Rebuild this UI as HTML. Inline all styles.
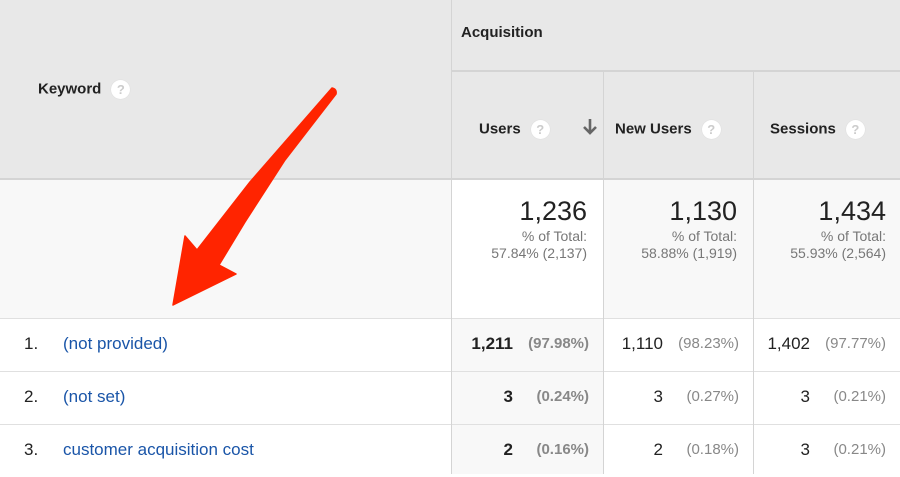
<!DOCTYPE html>
<html><head><style>
body{margin:0;width:900px;height:474px;overflow:hidden;font-family:"Liberation Sans",Arial,sans-serif;background:#fff;position:relative}
div{position:absolute;box-sizing:border-box}
.b{font-weight:bold;font-size:15px;color:#222}
.q{display:inline-block;width:19px;height:19px;border-radius:50%;background:#fff;color:#ccc;font-size:13px;text-align:center;line-height:19px;font-weight:bold;vertical-align:middle;margin-left:10px;box-shadow:0 0 1px #ccc}
.big{font-size:27px;color:#222;text-align:right;right:16px;top:17px}
.pt{font-size:14px;color:#777;text-align:right;line-height:17px;right:16px;top:49px}
.n{font-size:17px;color:#222;top:15px;right:90px;text-align:right}
.p{font-size:15px;color:#888;top:16px;right:14px}
.kw{font-size:17px;color:#1a55a8;left:63px;top:15px}
.ix{font-size:17px;color:#222;left:24px;top:15px}
</style></head><body>
<div style="left:0;top:0;width:900px;height:179px;background:#e8e8e8"></div>
<div style="left:0;top:179px;width:900px;height:140px;background:#f8f8f8"></div>
<div style="left:451px;top:179px;width:152px;height:140px;background:#fff"></div>
<div style="left:451px;top:319px;width:152px;height:155px;background:#f8f8f8"></div>
<div style="left:0;top:178px;width:900px;height:2px;background:#d4d4d4"></div>
<div style="left:451px;top:70px;width:449px;height:2px;background:#d4d4d4"></div>
<div style="left:0;top:318px;width:900px;height:1px;background:#e0e0e0"></div>
<div style="left:0;top:371px;width:900px;height:1px;background:#e0e0e0"></div>
<div style="left:0;top:424px;width:900px;height:1px;background:#e0e0e0"></div>
<div style="left:451px;top:0;width:1px;height:474px;background:#d4d4d4"></div>
<div style="left:603px;top:71px;width:1px;height:403px;background:#d4d4d4"></div>
<div style="left:753px;top:71px;width:1px;height:403px;background:#d4d4d4"></div>
<div class="b" style="left:38px;top:80px">Keyword<span class="q">?</span></div>
<div class="b" style="left:461px;top:24px">Acquisition</div>
<div class="b" style="left:479px;top:120px">Users<span class="q">?</span></div>
<svg style="position:absolute;left:582px;top:117px" width="16" height="20"><path d="M8,2 V16 M2,10 L8,16 L14,10" fill="none" stroke="#666" stroke-width="2.6"/></svg>
<div class="b" style="left:615px;top:120px">New Users<span class="q">?</span></div>
<div class="b" style="left:770px;top:120px">Sessions<span class="q">?</span></div>
<div style="left:451px;top:179px;width:152px;height:140px"><div class="big">1,236</div><div class="pt">% of Total:<br>57.84% (2,137)</div></div>
<div style="left:603px;top:179px;width:150px;height:140px"><div class="big">1,130</div><div class="pt">% of Total:<br>58.88% (1,919)</div></div>
<div style="left:753px;top:179px;width:147px;height:140px"><div class="big" style="right:14px">1,434</div><div class="pt" style="right:14px">% of Total:<br>55.93% (2,564)</div></div>
<div style="left:0;top:319px;width:451px;height:52px"><div class="ix">1.</div><div class="kw">(not provided)</div></div>
<div style="left:0;top:372px;width:451px;height:52px"><div class="ix">2.</div><div class="kw">(not set)</div></div>
<div style="left:0;top:425px;width:451px;height:52px"><div class="ix">3.</div><div class="kw">customer acquisition cost</div></div>
<div style="left:451px;top:319px;width:152px;height:52px"><div class="n" style="font-weight:bold">1,211</div><div class="p" style="font-weight:bold">(97.98%)</div></div>
<div style="left:603px;top:319px;width:150px;height:52px"><div class="n">1,110</div><div class="p">(98.23%)</div></div>
<div style="left:753px;top:319px;width:147px;height:52px"><div class="n">1,402</div><div class="p">(97.77%)</div></div>
<div style="left:451px;top:372px;width:152px;height:52px"><div class="n" style="font-weight:bold">3</div><div class="p" style="font-weight:bold">(0.24%)</div></div>
<div style="left:603px;top:372px;width:150px;height:52px"><div class="n">3</div><div class="p">(0.27%)</div></div>
<div style="left:753px;top:372px;width:147px;height:52px"><div class="n">3</div><div class="p">(0.21%)</div></div>
<div style="left:451px;top:425px;width:152px;height:52px"><div class="n" style="font-weight:bold">2</div><div class="p" style="font-weight:bold">(0.16%)</div></div>
<div style="left:603px;top:425px;width:150px;height:52px"><div class="n">2</div><div class="p">(0.18%)</div></div>
<div style="left:753px;top:425px;width:147px;height:52px"><div class="n">3</div><div class="p">(0.21%)</div></div>
<svg style="position:absolute;left:0;top:0" width="900" height="474">
<path d="M332,88 Q337,89 336,94 L285,160 L245,222 L219,265 L236,274 L173,305 L185,236 L197,250 L250,182 Z" fill="#ff2400" stroke="#ff2400" stroke-width="1.5" stroke-linejoin="round"/>
</svg>
</body></html>
